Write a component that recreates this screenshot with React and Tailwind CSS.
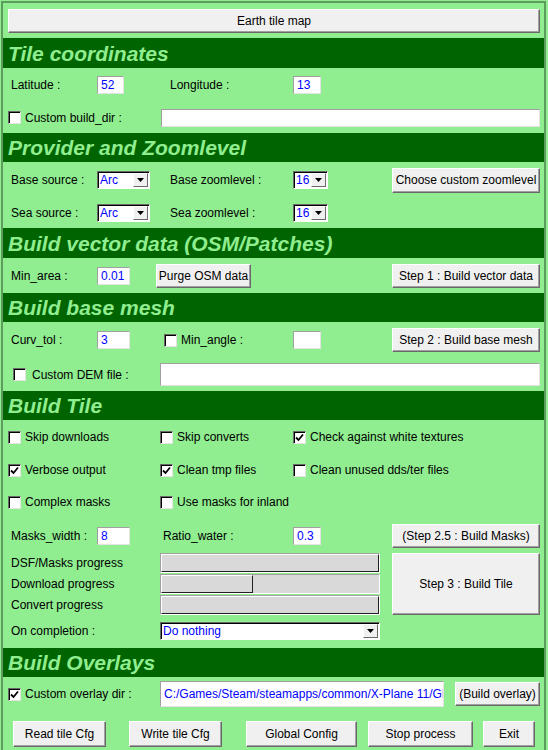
import React from 'react';

const font = "font-['Liberation_Sans',Arial,sans-serif]";

const Header = ({ title, className = '' }) => (
  <div
    className={`bg-[#006400] flex items-center pl-[5px] text-[21px] font-bold italic text-[#90ee90] leading-none ${font} ${className}`}
  >
    {title}
  </div>
);

const Button = ({ children, className = '' }) => (
  <div
    className={`flex items-center justify-center bg-[#f0f0f0] border border-t-white border-l-white border-r-[#696969] border-b-[#696969] shadow-[inset_-1px_-1px_0_#a0a0a0] text-[12px] text-black whitespace-nowrap overflow-hidden ${className}`}
  >
    {children}
  </div>
);

const Entry = ({ value = '', className = '' }) => (
  <div
    className={`bg-white border border-t-[#a0a0a0] border-l-[#a0a0a0] border-r-[#e3e3e3] border-b-[#e3e3e3] flex items-center pl-[3px] text-[12px] text-[#0000ff] whitespace-nowrap overflow-hidden ${className}`}
  >
    {value}
  </div>
);

const Combo = ({ value, className = '' }) => (
  <div
    className={`bg-white border border-t-[#696969] border-l-[#696969] border-r-white border-b-white shadow-[inset_1px_1px_0_#000] flex items-center text-[12px] text-[#0000ff] ${className}`}
  >
    <span className="pl-[2px] flex-1">{value}</span>
    <div className="w-[15px] h-[14px] mr-[1px] bg-[#f0f0f0] border border-t-white border-l-white border-r-[#696969] border-b-[#696969] flex items-center justify-center">
      <svg width="7" height="4" viewBox="0 0 7 4">
        <polygon points="0,0 7,0 3.5,4" fill="#000" />
      </svg>
    </div>
  </div>
);

const Check = ({ checked = false }) => (
  <div className="w-[13px] h-[13px] shrink-0 bg-white border border-t-[#696969] border-l-[#696969] border-r-[#e3e3e3] border-b-[#e3e3e3] shadow-[inset_1px_1px_0_#000] flex items-center justify-center">
    {checked && (
      <svg width="9" height="9" viewBox="0 0 9 9">
        <path d="M1 4.5 L3.5 7 L8 1.5" stroke="#000" strokeWidth="1.8" fill="none" />
      </svg>
    )}
  </div>
);

const CheckLabel = ({ checked, label }) => (
  <div className="flex items-center gap-[4px]">
    <Check checked={checked} />
    <span>{label}</span>
  </div>
);

const Bar = ({ pct }) => (
  <div className="h-[20px] w-[220px] bg-[#d9d9d9] border border-t-[#a0a0a0] border-l-[#a0a0a0] border-r-white border-b-white">
    <div
      className="h-full bg-[#d9d9d9] border border-t-white border-l-white border-r-[#202020] border-b-[#202020]"
      style={{ width: `${pct}%` }}
    />
  </div>
);

export default function App() {
  return (
    <div className={`w-[548px] h-[750px] bg-[#90ee90] overflow-hidden pt-[1px] pl-[1px] text-[12px] text-black ${font}`}>
      <div className="w-[545px] h-[760px] border-l-2 border-r-2 border-t-2 border-[#5c9c5c]">
        <Button className="mt-[6px] ml-[5px] w-[532px] h-[24px]">Earth tile map</Button>

        <Header title="Tile coordinates" className="mt-[5px] h-[30px]" />
        <div className="flex items-center h-[34px]">
          <div className="w-[94px] pl-[8px]">Latitude :</div>
          <Entry value="52" className="w-[27px] h-[18px]" />
          <div className="ml-[46px] w-[123px]">Longitude :</div>
          <Entry value="13" className="w-[28px] h-[18px]" />
        </div>
        <div className="flex items-center h-[31px]">
          <div className="w-[158px] pl-[5px]">
            <CheckLabel label="Custom build_dir :" />
          </div>
          <Entry className="w-[379px] h-[18px]" />
        </div>

        <Header title="Provider and Zoomlevel" className="h-[29px]" />
        <div className="flex items-center h-[36px]">
          <div className="w-[94px] pl-[8px]">Base source :</div>
          <Combo value="Arc" className="w-[53px] h-[18px]" />
          <div className="ml-[20px] w-[123px]">Base zoomlevel :</div>
          <Combo value="16" className="w-[35px] h-[18px]" />
          <Button className="ml-auto mr-[4px] w-[148px] h-[25px]">Choose custom zoomlevel</Button>
        </div>
        <div className="flex items-center h-[30px]">
          <div className="w-[94px] pl-[8px]">Sea source :</div>
          <Combo value="Arc" className="w-[53px] h-[18px]" />
          <div className="ml-[20px] w-[123px]">Sea zoomlevel :</div>
          <Combo value="16" className="w-[35px] h-[18px]" />
        </div>

        <Header title="Build vector data (OSM/Patches)" className="h-[30px]" />
        <div className="flex items-center h-[35px]">
          <div className="w-[94px] pl-[8px]">Min_area :</div>
          <Entry value="0.01" className="w-[33px] h-[18px]" />
          <Button className="ml-[26px] w-[95px] h-[24px]">Purge OSM data</Button>
          <Button className="ml-auto mr-[4px] w-[148px] h-[24px]">Step 1 : Build vector data</Button>
        </div>

        <Header title="Build base mesh" className="h-[29px]" />
        <div className="flex items-center h-[36px]">
          <div className="w-[94px] pl-[8px]">Curv_tol :</div>
          <Entry value="3" className="w-[33px] h-[18px]" />
          <div className="ml-[34px] w-[129px]">
            <CheckLabel label="Min_angle :" />
          </div>
          <Entry className="w-[28px] h-[18px]" />
          <Button className="ml-auto mr-[4px] w-[148px] h-[24px]">Step 2 : Build base mesh</Button>
        </div>
        <div className="flex items-center h-[33px]">
          <div className="w-[157px] pl-[10px]">
            <div className="flex items-center gap-[6px]">
              <Check />
              <span>Custom DEM file :</span>
            </div>
          </div>
          <Entry className="w-[380px] h-[23px]" />
        </div>

        <Header title="Build Tile" className="h-[29px]" />
        {[
          [
            ['Skip downloads', false],
            ['Skip converts', false],
            ['Check against white textures', true],
          ],
          [
            ['Verbose output', true],
            ['Clean tmp files', true],
            ['Clean unused dds/ter files', false],
          ],
          [
            ['Complex masks', false],
            ['Use masks for inland', false],
          ],
        ].map((row, i) => (
          <div key={i} className={`flex items-center ${i === 0 ? 'h-[34px]' : 'h-[32px]'}`}>
            {row.map(([label, checked], j) => (
              <div key={label} className={j === 0 ? 'w-[157px] pl-[5px]' : j === 1 ? 'w-[133px]' : ''}>
                <CheckLabel label={label} checked={checked} />
              </div>
            ))}
          </div>
        ))}
        <div className="flex items-center h-[35px]">
          <div className="w-[94px] pl-[8px]">Masks_width :</div>
          <Entry value="8" className="w-[33px] h-[18px]" />
          <div className="ml-[33px] w-[130px]">Ratio_water :</div>
          <Entry value="0.3" className="w-[28px] h-[18px]" />
          <Button className="ml-auto mr-[4px] w-[148px] h-[24px]">(Step 2.5 : Build Masks)</Button>
        </div>
        <div className="flex h-[62px]">
          <div className="flex flex-col gap-[1px]">
            {[
              ['DSF/Masks progress', 100],
              ['Download progress', 42],
              ['Convert progress', 100],
            ].map(([label, pct]) => (
              <div key={label} className="flex items-center">
                <div className="w-[157px] pl-[8px]">{label}</div>
                <Bar pct={pct} />
              </div>
            ))}
          </div>
          <Button className="ml-auto mr-[4px] w-[148px] h-[62px]">Step 3 : Build Tile</Button>
        </div>
        <div className="flex items-center h-[31px]">
          <div className="w-[157px] pl-[8px]">On completion :</div>
          <Combo value="Do nothing" className="w-[220px] h-[18px]" />
        </div>

        <Header title="Build Overlays" className="mt-[2px] h-[29px]" />
        <div className="flex items-center h-[34px]">
          <div className="w-[157px] pl-[5px]">
            <CheckLabel label="Custom overlay dir :" checked />
          </div>
          <Entry value="C:/Games/Steam/steamapps/common/X-Plane 11/Global Scenery" className="w-[284px] h-[26px]" />
          <Button className="ml-[11px] w-[85px] h-[24px]">(Build overlay)</Button>
        </div>
        <div className="flex items-center mt-[10px] h-[26px]">
          <Button className="ml-[10px] w-[93px] h-[26px]">Read tile Cfg</Button>
          <Button className="ml-[23px] w-[93px] h-[26px]">Write tile Cfg</Button>
          <Button className="ml-[24px] w-[111px] h-[26px]">Global Config</Button>
          <Button className="ml-[11px] w-[105px] h-[26px]">Stop process</Button>
          <Button className="ml-[10px] w-[52px] h-[26px]">Exit</Button>
        </div>
      </div>
    </div>
  );
}
